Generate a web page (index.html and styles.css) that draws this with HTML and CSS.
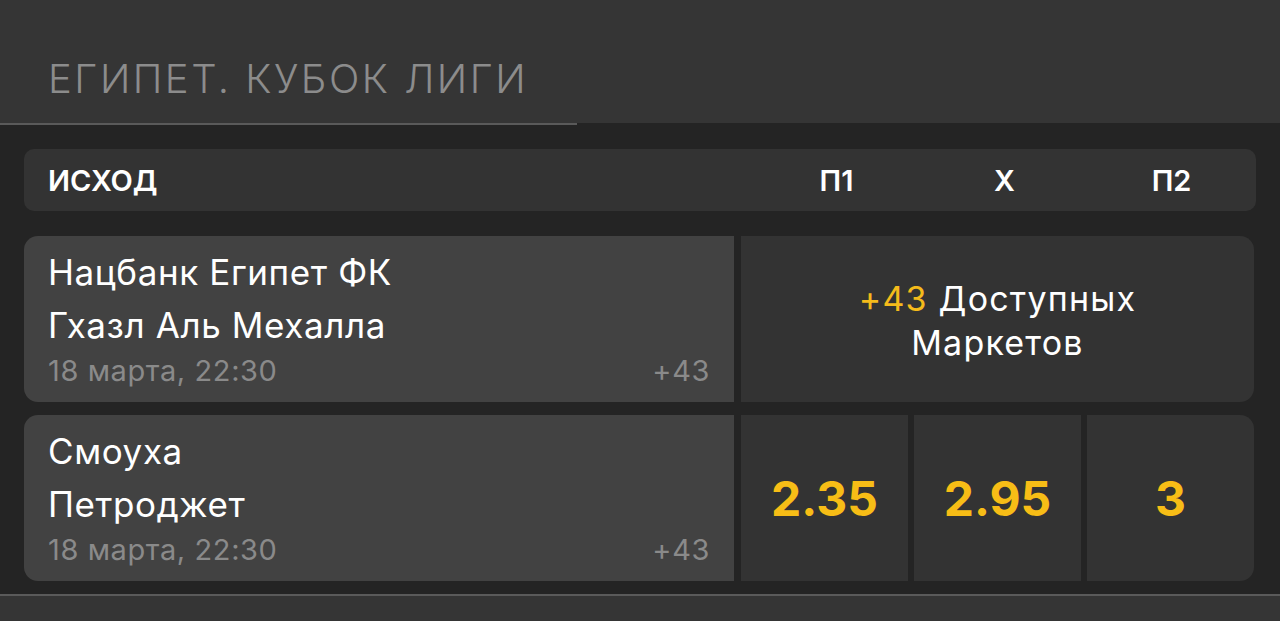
FILE: index.html
```html
<!DOCTYPE html>
<html lang="ru">
<head>
<meta charset="utf-8">
<title>Египет. Кубок лиги</title>
<link rel="stylesheet" href="styles.css">
</head>
<body>
  <header class="league">
    <h1 class="league-title">ЕГИПЕТ. КУБОК ЛИГИ</h1>
  </header>
  <div class="league-rule"></div>

  <section class="market">
    <div class="market-head">
      <div class="head-label">ИСХОД</div>
      <div class="head-col head-p1">П1</div>
      <div class="head-col head-x">X</div>
      <div class="head-col head-p2">П2</div>
    </div>

    <div class="event">
      <div class="event-info">
        <div class="team">Нацбанк Египет ФК</div>
        <div class="team">Гхазл Аль Мехалла</div>
        <div class="event-meta">
          <span class="event-date">18 марта, 22:30</span>
          <span class="event-more">+43</span>
        </div>
      </div>
      <div class="event-markets">
        <p class="markets-text"><span class="accent">+43</span> Доступных<br>Маркетов</p>
      </div>
    </div>

    <div class="event">
      <div class="event-info">
        <div class="team">Смоуха</div>
        <div class="team">Петроджет</div>
        <div class="event-meta">
          <span class="event-date">18 марта, 22:30</span>
          <span class="event-more">+43</span>
        </div>
      </div>
      <div class="odd">2.35</div>
      <div class="odd">2.95</div>
      <div class="odd odd-last">3</div>
    </div>
  </section>

  <div class="bottom-rule"></div>
  <div class="bottom-bar"></div>
</body>
</html>
```

FILE: styles.css
```css
* { box-sizing: border-box; }

html, body {
  margin: 0;
  padding: 0;
}

body {
  background: #242424;
  font-family: Inter, "Noto Sans", sans-serif;
  color: #ffffff;
  width: 1280px;
  height: 621px;
  overflow: hidden;
}

.league {
  height: 123px;
  background: #353535;
  padding: 55px 0 0 48px;
}

.league-title {
  margin: 0;
  font-size: 40px;
  line-height: 48px;
  font-weight: 300;
  letter-spacing: 2.5px;
  color: #8c8c8c;
}

.league-rule {
  width: 577px;
  height: 2px;
  background: #5a5a5a;
}

.market {
  padding: 24px 24px 0 24px;
}

.market-head {
  height: 62px;
  background: #333333;
  border-radius: 10px;
  display: grid;
  grid-template-columns: 711px 167px 167px 167px;
  column-gap: 6px;
  align-items: center;
  font-size: 29px;
  font-weight: 600;
  margin-bottom: 25px;
}

.head-label {
  padding-left: 24px;
}

.head-col {
  text-align: center;
}

.head-p1 { padding-left: 24px; }
.head-x { padding-left: 14px; }
.head-p2 { padding-left: 2px; }

.event {
  display: grid;
  grid-template-columns: 711px 167px 167px 167px;
  column-gap: 6px;
  height: 166px;
  margin-bottom: 13px;
}

.event-info {
  background: #424242;
  border-radius: 14px 0 0 14px;
  padding: 10px 24px 0 24px;
  margin-right: 1px;
}

.team {
  font-size: 35px;
  line-height: 53px;
  font-weight: 400;
  letter-spacing: 0.6px;
}

.event-meta {
  display: flex;
  justify-content: space-between;
  font-size: 29px;
  line-height: 37px;
  color: #8a8a8a;
  letter-spacing: 0.6px;
}

.event-markets {
  grid-column: 2 / 5;
  background: #333333;
  border-radius: 0 14px 14px 0;
  display: flex;
  align-items: center;
  justify-content: center;
}

.markets-text {
  margin: 0 0 -4px 0;
  text-align: center;
  font-size: 34px;
  line-height: 44px;
  letter-spacing: 1.2px;
}

.accent {
  color: #f5bb1b;
}

.odd {
  background: #333333;
  display: flex;
  align-items: center;
  justify-content: center;
  font-size: 48px;
  font-weight: 700;
  color: #f7bd16;
}

.odd-last {
  border-radius: 0 14px 14px 0;
}

.bottom-rule {
  height: 2px;
  background: #5a5a5a;
}

.bottom-bar {
  height: 40px;
  background: #353535;
}
```
